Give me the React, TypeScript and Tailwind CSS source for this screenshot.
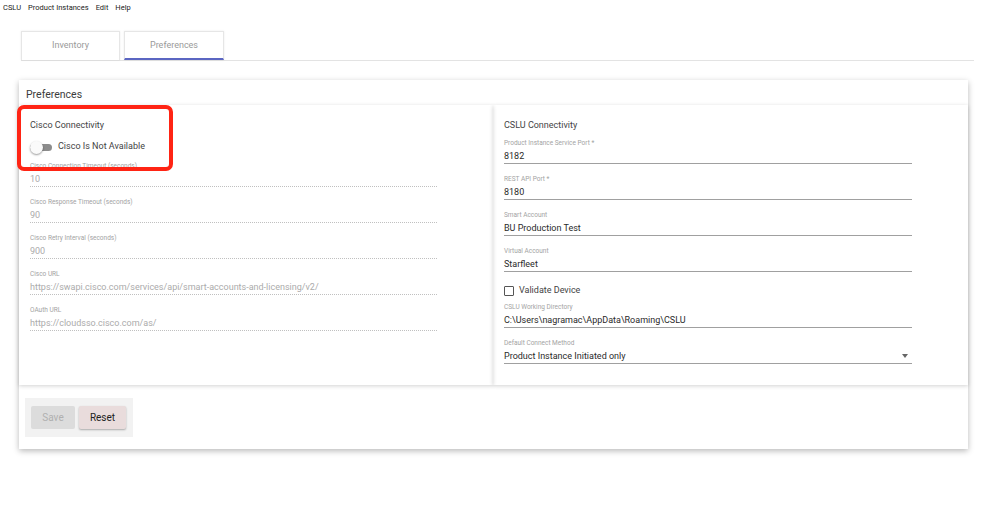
const leftFields = [
  { label: 'Cisco Connection Timeout (seconds)', value: '10' },
  { label: 'Cisco Response Timeout (seconds)', value: '90' },
  { label: 'Cisco Retry Interval (seconds)', value: '900' },
  { label: 'Cisco URL', value: 'https://swapi.cisco.com/services/api/smart-accounts-and-licensing/v2/' },
  { label: 'OAuth URL', value: 'https://cloudsso.cisco.com/as/' },
];

const rightTop = [
  { label: 'Product Instance Service Port *', value: '8182' },
  { label: 'REST API Port *', value: '8180' },
  { label: 'Smart Account', value: 'BU Production Test' },
  { label: 'Virtual Account', value: 'Starfleet' },
];

function Field({ label, value, disabled }: { label: string; value: string; disabled?: boolean }) {
  return (
    <div className="mb-[9px]">
      <div className="h-[12px] leading-[12px] text-[6.5px] text-[#a3a3a3] whitespace-nowrap">{label}</div>
      <div
        className={
          disabled
            ? 'h-[15px] leading-[14px] text-[9px] text-[#ababab] border-b border-dotted border-[#c0c0c0] whitespace-nowrap'
            : 'h-[15px] leading-[14px] text-[9px] text-[#2a2a2a] border-b border-[#a0a0a0] whitespace-nowrap'
        }
      >
        {value}
      </div>
    </div>
  );
}

export default function App() {
  return (
    <div className="relative w-[999px] h-[511px] bg-white font-['Roboto',sans-serif]">
      {/* menu bar */}
      <div className="h-[16px] flex items-center pl-[3px] gap-[7px] text-[7.5px] text-[#222]">
        <span>CSLU</span>
        <span>Product Instances</span>
        <span>Edit</span>
        <span>Help</span>
      </div>

      {/* tabs */}
      <div className="mt-[15px] ml-[21px] w-[953px] flex gap-[4px] border-b border-[#e3e3e3]">
        <div className="w-[99px] h-[29px] flex items-center justify-center text-[9px] text-[#9a9a9a] border border-[#e6e6e6] border-b-0 shadow-[0_0_2px_rgba(0,0,0,0.08)]">
          Inventory
        </div>
        <div className="w-[100px] h-[29px] pt-[1px] flex items-center justify-center text-[9px] text-[#9a9a9a] border border-[#e6e6e6] border-b-2 border-b-[#5b66c2] shadow-[0_0_2px_rgba(0,0,0,0.08)]">
          Preferences
        </div>
      </div>

      {/* card */}
      <div className="mt-[19px] ml-[19px] w-[949px] h-[369px] bg-white shadow-[0_2px_6px_rgba(0,0,0,0.28)] flex flex-col">
        <div className="h-[25px] pt-[9px] pl-[7px] leading-[12px] text-[10.5px] text-[#3c3c3c]">Preferences</div>

        <div className="h-[280px] flex">
          <div className="w-[474px] pl-[11px] pt-[14px] shadow-[0_1px_4px_rgba(0,0,0,0.18)]">
            <div className="h-[12px] leading-[12px] text-[9px] text-[#444]">Cisco Connectivity</div>
            <div className="mt-[8px] h-[16px] flex items-center">
              <div className="relative w-[22px] h-[13px] flex items-center">
                <div className="w-[22px] h-[7px] rounded-full bg-[#8c8c8c]" />
                <div className="absolute left-0 top-0 w-[13px] h-[13px] rounded-full bg-[#fafafa] shadow-[0_1px_2px_rgba(0,0,0,0.4)]" />
              </div>
              <span className="ml-[6px] text-[9px] text-[#444]">Cisco Is Not Available</span>
            </div>
            <div className="mt-[5px] w-[407px]">
              {leftFields.map((f) => (
                <Field key={f.label} label={f.label} value={f.value} disabled />
              ))}
            </div>
          </div>

          <div className="flex-1 pl-[11px] pt-[14px] shadow-[0_1px_4px_rgba(0,0,0,0.18)]">
            <div className="h-[12px] leading-[12px] text-[9px] text-[#444]">CSLU Connectivity</div>
            <div className="mt-[6px] w-[408px]">
              {rightTop.map((f) => (
                <Field key={f.label} label={f.label} value={f.value} />
              ))}
              <div className="h-[20px] flex items-center">
                <div className="w-[10px] h-[10px] border-[1.5px] border-[#555] rounded-[1px]" />
                <span className="ml-[5px] text-[9px] text-[#444]">Validate Device</span>
              </div>
              <Field label="CSLU Working Directory" value="C:\Users\nagramac\AppData\Roaming\CSLU" />
              <div className="mb-[9px]">
                <div className="h-[12px] leading-[12px] text-[6.5px] text-[#a3a3a3]">Default Connect Method</div>
                <div className="h-[15px] flex items-center justify-between text-[9px] text-[#2a2a2a] border-b border-[#a0a0a0]">
                  <span className="leading-[14px]">Product Instance Initiated only</span>
                  <span className="mr-[4px] w-0 h-0 border-l-[3.5px] border-r-[3.5px] border-t-[4px] border-l-transparent border-r-transparent border-t-[#666]" />
                </div>
              </div>
            </div>
          </div>
        </div>

        <div className="flex-1 pl-[6px] pt-[13px]">
          <div className="w-[108px] h-[39px] bg-[#f2f2f2] flex items-center pl-[6px] gap-[4px]">
            <button className="w-[44px] h-[23px] bg-[#dcdcdc] text-[10px] text-[#b0b0b0] rounded-[2px]">Save</button>
            <button className="w-[47px] h-[23px] bg-[#e9dcdc] text-[10px] text-[#222] rounded-[2px] shadow-[0_1px_2px_rgba(0,0,0,0.3)]">
              Reset
            </button>
          </div>
        </div>
      </div>

      {/* annotation highlight */}
      <div className="absolute left-[17px] top-[105px] w-[156px] h-[66px] border-4 border-[#ff2414] rounded-[7px]" />
    </div>
  );
}
